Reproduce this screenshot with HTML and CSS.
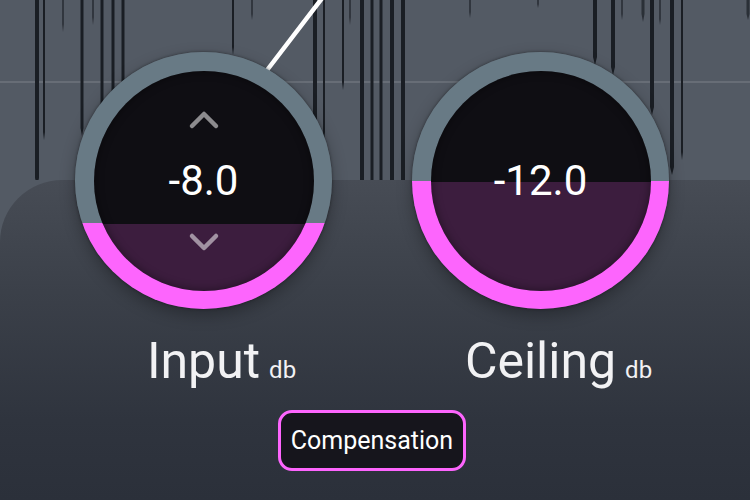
FILE: index.html
```html
<!DOCTYPE html>
<html lang="en">
<head>
<meta charset="utf-8">
<title>Limiter</title>
<link rel="stylesheet" href="styles.css">
</head>
<body>
<div class="screen">
  <div class="backdrop">
    <svg class="wave" width="750" height="180" viewBox="0 0 750 180">
      <rect x="0" y="81" width="750" height="2" fill="#676d76"/>
      <g class="spikes" fill="#1a1e24">
        <path d="M35 0H39V178L37 186L35 178Z"/>
        <path d="M43 0H45V132L44 140L43 132Z"/>
        <path d="M62 0H64V24L63 32L62 24Z" opacity=".6"/>
        <path d="M80.5 0H83.5V128L82 136L80.5 128Z"/>
        <path d="M92 0H94V17L93 25L92 17Z" opacity=".6"/>
        <path d="M100.5 0H103.5V112L102 120L100.5 112Z"/>
        <path d="M111.5 0H114.5V96L113 104L111.5 96Z"/>
        <path d="M121.5 0H124.5V90L123 98L121.5 90Z"/>
        <path d="M232 0H234V47L233 55L232 47Z"/>
        <path d="M251 0H253V14L252 20L251 14Z" opacity=".6"/>
        <path d="M313 0H317V172L315 180L313 172Z"/>
        <path d="M323 0H325V132L324 140L323 132Z"/>
        <path d="M342 0H344V82L343 90L342 82Z"/>
        <path d="M349 0H351V17L350 25L349 17Z" opacity=".6"/>
        <path d="M360 0H364V180H360Z"/>
        <path d="M370.5 0H373.5V180H370.5Z"/>
        <path d="M379.5 0H382.5V180H379.5Z"/>
        <path d="M390 0H394V180H390Z"/>
        <path d="M401 0H405V180H401Z"/>
        <path d="M469 0H471V12L470 18L469 12Z" opacity=".6"/>
        <path d="M537 0H539V4L538 8L537 4Z" opacity=".6"/>
        <path d="M593 0H597V57L595 65L593 57Z"/>
        <path d="M611 0H615V67L613 75L611 67Z"/>
        <path d="M621 0H623V14L622 20L621 14Z" opacity=".6"/>
        <path d="M641.5 0H644.5V14L643 22L641.5 14Z" opacity=".7"/>
        <path d="M650 0H654V107L652 115L650 107Z"/>
        <path d="M659 0H661V19L660 25L659 19Z" opacity=".6"/>
        <path d="M670 0H674V167L672 175L670 167Z"/>
        <path d="M681 0H683V152L682 160L681 152Z"/>
        <path d="M746.5 0H749.5V14L748 20L746.5 14Z" opacity=".7"/>
      </g>
      <line x1="323" y1="-3" x2="258" y2="82" stroke="#ffffff" stroke-width="4.5" stroke-linecap="round"/>
    </svg>
    <div class="panel"></div>
  </div>

  <div class="controls">
    <div class="knobs">
      <div class="control">
        <div class="knob" style="--cut: 171px">
          <div class="face">
            <svg class="chev" width="32" height="20" viewBox="0 0 32 20"><path d="M4 16L16 4L28 16"/></svg>
            <span class="value">-8.0</span>
            <svg class="chev" width="32" height="20" viewBox="0 0 32 20"><path d="M4 4L16 16L28 4"/></svg>
          </div>
        </div>
        <div class="label"><span class="name">Input</span><span class="unit">db</span></div>
      </div>
      <div class="control">
        <div class="knob" style="--cut: 129px">
          <div class="face">
            <span class="value">-12.0</span>
          </div>
        </div>
        <div class="label"><span class="name">Ceiling</span><span class="unit">db</span></div>
      </div>
    </div>
    <button class="comp" type="button">Compensation</button>
  </div>
</div>
</body>
</html>
```

FILE: styles.css
```css
* { box-sizing: border-box; }

html, body {
  margin: 0;
  padding: 0;
  width: 750px;
  height: 500px;
  overflow: hidden;
  background: #2b303a;
  font-family: Roboto, "Liberation Sans", sans-serif;
}

.screen {
  width: 750px;
  height: 500px;
  display: grid;
  overflow: hidden;
}

.backdrop,
.controls {
  grid-area: 1 / 1;
}

.backdrop {
  display: flex;
  flex-direction: column;
  background: #535a64;
}

.wave {
  display: block;
  flex: 0 0 180px;
}

.panel {
  flex: 1;
  border-top-left-radius: 62px;
  background: linear-gradient(180deg, #474c55 0%, #3b4049 35%, #2f343e 75%, #2b303a 100%);
}

.controls {
  display: flex;
  flex-direction: column;
  align-items: center;
  padding: 52px 6px 0 0;
}

.knobs {
  display: flex;
  gap: 80px;
}

.control {
  width: 257px;
  display: flex;
  flex-direction: column;
  align-items: center;
  gap: 27px;
}

.knob {
  width: 257px;
  height: 257px;
  border-radius: 50%;
  display: flex;
  align-items: center;
  justify-content: center;
  background: linear-gradient(180deg, #687a85 var(--cut), #fd65fd var(--cut));
  box-shadow: 0 0 3px rgba(0, 0, 0, 0.45), 0 6px 16px rgba(0, 0, 0, 0.3);
}

.face {
  width: 220px;
  height: 220px;
  border-radius: 50%;
  display: flex;
  flex-direction: column;
  align-items: center;
  justify-content: center;
  gap: 30px;
  background: linear-gradient(180deg, #0f0e13 calc(var(--cut) - 18.5px), #3c1d3e calc(var(--cut) - 18.5px));
  box-shadow: inset 0 0 10px rgba(0, 0, 0, 0.45);
}

.chev {
  display: block;
  fill: none;
  stroke: rgba(255, 255, 255, 0.52);
  stroke-width: 4.5;
  stroke-linecap: round;
  stroke-linejoin: round;
}

.value {
  color: #ffffff;
  font-size: 42px;
  line-height: 42px;
}

.label {
  width: 100%;
  display: grid;
  grid-template-columns: 1fr auto 1fr;
  align-items: baseline;
  color: #f2f2f4;
}

.name {
  grid-column: 2;
  font-size: 50px;
  line-height: 50px;
}

.unit {
  grid-column: 3;
  justify-self: start;
  margin-left: 9px;
  font-size: 24px;
  line-height: 24px;
}

.comp {
  margin-top: 24px;
  padding: 12px 10px;
  border: 3px solid #fd65fd;
  border-radius: 14px;
  background: #16151c;
  color: #ffffff;
  font-family: Roboto, "Liberation Sans", sans-serif;
  font-size: 25px;
  line-height: 31px;
}
```
